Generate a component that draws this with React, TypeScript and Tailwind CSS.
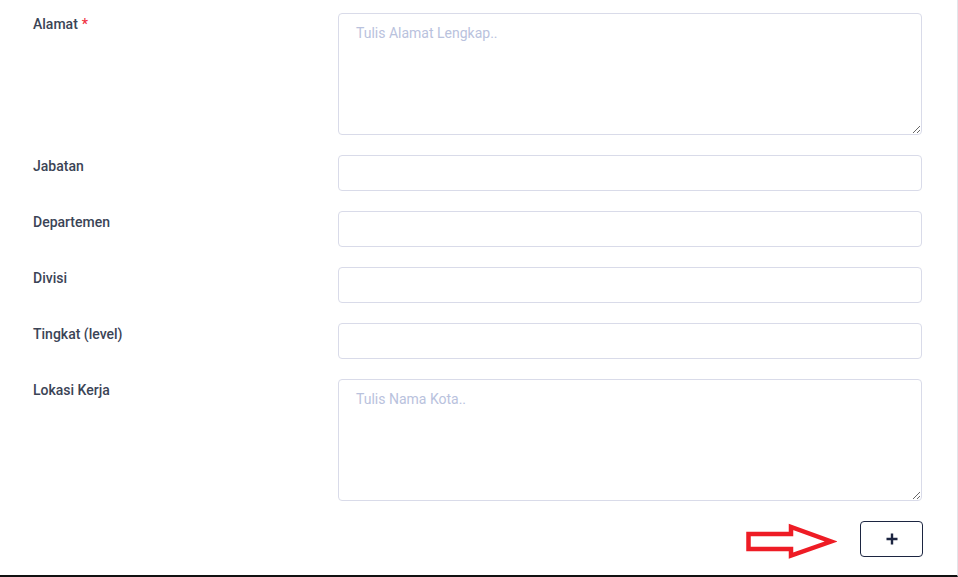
import React from "react";

const labelCls = "text-[14px] font-medium text-[#3b4456] leading-[20px] pt-[1px]";
const inputCls = "block w-full h-[36px] border border-[#d9dbe9] rounded-[4px] bg-white";
const taCls = "block w-full h-[122px] border border-[#d9dbe9] rounded-[4px] bg-white px-[17px] py-[9px] text-[14px] text-[#2f3a4d] placeholder:text-[#b9c2dd] outline-none resize-y";

function Row({ label, req, children }: { label: string; req?: boolean; children: React.ReactNode }) {
  return (
    <div className="flex">
      <div className="w-[305px] shrink-0">
        <div className={labelCls}>
          {label}
          {req && <span className="text-[#f0303f] ml-[4px]">*</span>}
        </div>
      </div>
      <div className="w-[584px]">{children}</div>
    </div>
  );
}

export default function App() {
  return (
    <div
      className="w-[958px] h-[577px] bg-white border-r border-r-[#e3e5ea] border-b-2 border-b-[#111111] overflow-hidden"
      style={{ fontFamily: "Roboto, 'Liberation Sans', sans-serif" }}
    >
      <div className="pl-[33px] pt-[13px] flex flex-col gap-[20px]">
        <Row label="Alamat" req>
          <textarea className={taCls} placeholder="Tulis Alamat Lengkap.." />
        </Row>
        <Row label="Jabatan">
          <input className={inputCls} />
        </Row>
        <Row label="Departemen">
          <input className={inputCls} />
        </Row>
        <Row label="Divisi">
          <input className={inputCls} />
        </Row>
        <Row label="Tingkat (level)">
          <input className={inputCls} />
        </Row>
        <Row label="Lokasi Kerja">
          <textarea className={taCls} placeholder="Tulis Nama Kota.." />
        </Row>
        <div className="flex justify-end items-start w-[890px]">
          <svg width="92" height="38" viewBox="0 0 92 38" className="mr-[23px] shrink-0">
            <path
              d="M3.5 13 H46 V6 L86 20.5 L46 34.5 V28 H3.5 Z"
              fill="none"
              stroke="#ee1c25"
              strokeWidth="4.5"
              strokeLinejoin="miter"
              strokeMiterlimit="3"
            />
          </svg>
          <button className="w-[63px] h-[36px] shrink-0 border border-[#1c2541] rounded-[4px] flex items-center justify-center bg-white">
            <svg width="14" height="14" viewBox="0 0 14 14">
              <path d="M7 1.5 V12.5 M1.5 7 H12.5" stroke="#1c2541" strokeWidth="2.4" />
            </svg>
          </button>
        </div>
      </div>
    </div>
  );
}
